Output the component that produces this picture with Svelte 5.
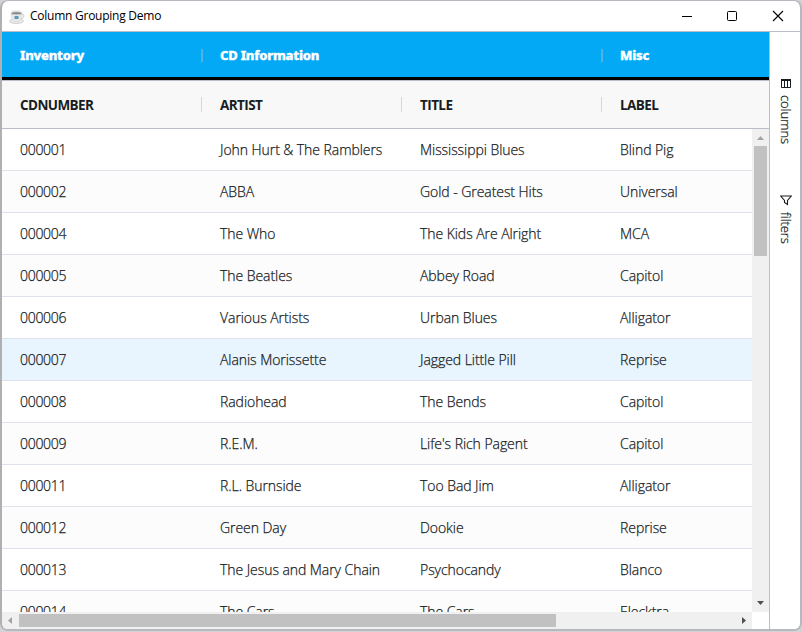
<script>
  const groups = [
    { label: 'Inventory', span: 1 },
    { label: 'CD Information', span: 2 },
    { label: 'Misc', span: 1 },
  ];
  const columns = ['CDNUMBER', 'ARTIST', 'TITLE', 'LABEL'];
  const rows = [
    ['000001', 'John Hurt & The Ramblers', 'Mississippi Blues', 'Blind Pig'],
    ['000002', 'ABBA', 'Gold - Greatest Hits', 'Universal'],
    ['000004', 'The Who', 'The Kids Are Alright', 'MCA'],
    ['000005', 'The Beatles', 'Abbey Road', 'Capitol'],
    ['000006', 'Various Artists', 'Urban Blues', 'Alligator'],
    ['000007', 'Alanis Morissette', 'Jagged Little Pill', 'Reprise'],
    ['000008', 'Radiohead', 'The Bends', 'Capitol'],
    ['000009', 'R.E.M.', "Life's Rich Pagent", 'Capitol'],
    ['000011', 'R.L. Burnside', 'Too Bad Jim', 'Alligator'],
    ['000012', 'Green Day', 'Dookie', 'Reprise'],
    ['000013', 'The Jesus and Mary Chain', 'Psychocandy', 'Blanco'],
    ['000014', 'The Cars', 'The Cars', 'Elecktra'],
  ];
  let hovered = $state(5);
</script>

<div class="desktop">
  <div class="window">
    <header class="titlebar">
      <svg class="cup" width="16" height="14" viewBox="0 0 16 14">
        <ellipse cx="7.5" cy="11.2" rx="7" ry="2.2" fill="#eee" stroke="#bbb" stroke-width=".7" />
        <path d="M12 4.5q3-.8 3 1.5t-4 3" fill="none" stroke="#ccc" />
        <path d="M2 3.5h11q0 7-3.5 8h-4Q2 10.500 2 3.500z" fill="#e8e8e8" stroke="#ccc" stroke-width=".5" />
        <ellipse cx="7.500" cy="3.200" rx="5.500" ry="1.500" fill="#888" stroke="#d5d5d5" stroke-width=".8" />
        <path d="M5.500 6h4v3h-4z" fill="#5c9bb5" />
        <path d="M3 1h8" stroke="#ddd" />
      </svg>
      <span class="title">Column Grouping Demo</span>
      <svg class="controls" width="110" height="14" viewBox="0 0 110 14" fill="none" stroke="#000">
        <path d="M4 7.500h10" />
        <rect x="49.500" y="2.500" width="9" height="9" rx="1" />
        <path d="M95 2l10 10M105 2l-10 10" stroke-width="1.100" />
      </svg>
    </header>

    <div class="body">
      <main class="grid">
        <div class="groups">
          {#each groups as g, i}
            <div class="group" class:wide={g.span === 2}>
              <span>{g.label}</span>
              {#if i < 2}<i></i>{/if}
            </div>
          {/each}
        </div>
        <div class="heads">
          {#each columns as c, i}
            <div class="head"><span>{c}</span>{#if i < 3}<i></i>{/if}</div>
          {/each}
        </div>
        <div class="viewport">
          <div class="rows">
            {#each rows as row, r}
              <div class="row" class:odd={r % 2 === 1} class:hover={hovered === r}>
                {#each row as cell}<div class="cell">{cell}</div>{/each}
              </div>
            {/each}
          </div>
          <div class="vbar">
            <svg width="17" height="17"><path d="M5 11l3.500-4 3.500 4z" fill="#a3a3a3" /></svg>
            <div class="vthumb"></div>
            <svg class="end" width="17" height="17"><path d="M5 6l3.500 4L12 6z" fill="#505050" /></svg>
          </div>
        </div>
        <div class="foot">
          <div class="hbar">
            <svg width="17" height="17"><path d="M10 5L6 8.500l4 3.500z" fill="#a3a3a3" /></svg>
            <div class="hthumb"></div>
            <svg class="end" width="17" height="17"><path d="M7 5l4 3.500L7 12z" fill="#505050" /></svg>
          </div>
        </div>
      </main>
      <aside class="side">
        <button class="tab columns">
          <svg width="10" height="9" viewBox="0 0 10 9" fill="none" stroke="#181d1f">
            <path d="M.5 1v7.500h9V1M3.500 2v6.500M6.500 2v6.500" /><path d="M0 1h10" stroke-width="2" />
          </svg>
          <span>columns</span>
        </button>
        <button class="tab filters">
          <svg width="12" height="11" viewBox="0 0 12 11" fill="none" stroke="#181d1f" stroke-width="1.100">
            <path d="M.7 1h10.600L7.500 5.500V9.500L4.500 7.500V5.500z" />
          </svg>
          <span>filters</span>
        </button>
      </aside>
    </div>
  </div>
</div>

<style>
  :global(body) { margin: 0; overflow: hidden; }
  .desktop {
    box-sizing: border-box; width: 802px; height: 632px; padding-bottom: 1px;
    background: #d3d3d3; font-family: "Open Sans", "Noto Sans", sans-serif; color: #181d1f;
  }
  .window {
    box-sizing: border-box; height: 631px; display: flex; flex-direction: column;
    border: solid #b7b9c0; border-width: 1px 2px 2px; border-left-color: #b0b0b2;
    border-radius: 8px; background: #fff; overflow: hidden;
  }
  .titlebar {
    box-sizing: border-box; height: 31px; flex: none; display: flex; align-items: center;
    padding: 0 12px 0 7px; border-bottom: 1px solid #babfc7;
  }
  .cup { margin-top: 1px; }
  .title { margin-left: 5px; font-size: 12px; line-height: 16px; color: #000; white-space: nowrap; letter-spacing: -.25px; }
  .controls { margin: -1px 0 0 auto; }
  .body { flex: 1; display: flex; min-height: 0; }
  .grid { width: 767px; display: flex; flex-direction: column; }
  .groups {
    box-sizing: border-box; height: 49px; flex: none; display: flex; background: #03a9f4;
    border-bottom: 1px solid #babfc7; box-shadow: inset 0 -3px #000;
  }
  .group, .head {
    box-sizing: border-box; width: 200px; padding-left: 18px; display: flex; align-items: center;
    justify-content: space-between; flex: none; white-space: nowrap;
  }
  .group {
    height: 46px; color: #fff; font-family: "Noto Sans", "Open Sans", sans-serif; font-size: 13px;
    font-weight: 800; letter-spacing: -.2px; -webkit-text-stroke: .4px #fff;
  }
  .group.wide { width: 400px; }
  .group i { width: 2px; height: 13px; margin-right: -1px; background: #4eb4e4; }
  .heads {
    box-sizing: border-box; height: 48px; flex: none; display: flex; overflow: hidden;
    background: #f8f8f8; border-bottom: 1px solid #babfc7;
  }
  .head { font-size: 13.5px; font-weight: 700; letter-spacing: -.58px; }
  .head i { width: 1px; height: 15px; background: #d6d8dc; }
  .viewport { flex: 1; min-height: 0; display: flex; }
  .rows { width: 750px; overflow: hidden; }
  .row { box-sizing: border-box; height: 42px; display: flex; border-bottom: 1px solid #dde2eb; background: #fff; }
  .row.odd { background: #fcfcfc; }
  .row.hover { background: #e8f4fe; }
  .cell {
    box-sizing: border-box; width: 200px; flex: none; padding-left: 18px;
    font-size: 14px; font-weight: 300; line-height: 42px; letter-spacing: -.06px; white-space: nowrap;
    -webkit-text-stroke: .25px #181d1f;
  }
  .cell:first-child { letter-spacing: -.3px; }
  .vbar { width: 17px; display: flex; flex-direction: column; background: #f0f0f0; }
  .vbar svg, .hbar svg { display: block; flex: none; }
  .vthumb { height: 110px; margin: 0 2px; background: #c1c1c1; }
  .vbar .end { margin-top: auto; }
  .foot { height: 17px; flex: none; background: #fff; }
  .hbar { width: 750px; height: 17px; display: flex; background: #f0f0f0; }
  .hthumb { width: 537px; margin: 2px 0; background: #c1c1c1; }
  .hbar .end { margin-left: auto; }
  .side { box-sizing: border-box; width: 31px; border-left: 1px solid #babfc7; background: #fff; }
  .tab {
    display: flex; flex-direction: column; align-items: center; width: 32px; padding: 0; border: 0;
    background: none; font: 300 13px/18px "Open Sans", "Noto Sans", sans-serif; color: #181d1f;
    -webkit-text-stroke: .25px #181d1f;
  }
  .tab svg { display: block; }
  .tab span { writing-mode: vertical-rl; letter-spacing: -.1px; }
  .columns { margin-top: 47px; }
  .columns span { margin-top: 7px; }
  .filters { margin-top: 51px; }
  .filters span { margin-top: 6px; }
</style>
